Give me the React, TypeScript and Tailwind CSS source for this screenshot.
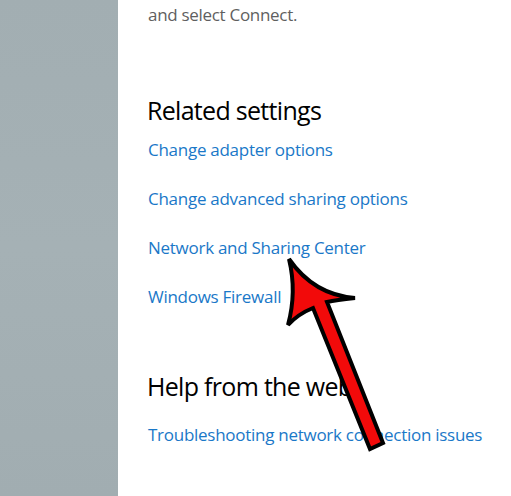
const links = [
  'Change adapter options',
  'Change advanced sharing options',
  'Network and Sharing Center',
  'Windows Firewall',
];

function Arrow() {
  return (
    <svg
      className="absolute left-0 top-0 pointer-events-none"
      width="511"
      height="496"
      viewBox="0 0 511 496"
    >
      <path
        d="M289 259 Q314 295 355 298 Q336 300 327 302 L383 443 L370 449 L313 308 Q298 314 288 325 Q297 292 289 259 Z"
        fill="#f20a0a"
        stroke="#000"
        strokeWidth="4"
        strokeLinejoin="miter"
      />
    </svg>
  );
}

export default function App() {
  return (
    <div
      className="relative flex w-[511px] h-[496px] overflow-hidden bg-white"
      style={{ fontFamily: '"Segoe UI", "Open Sans", "Noto Sans", sans-serif' }}
    >
      <div className="w-[118px] h-full bg-gradient-to-b from-[#a2aeb2] via-[#a5b1b5] to-[#a1adb1]" />

      <div className="flex-1 pl-[30px] flex flex-col">
        <p className="mt-[3px] h-6 leading-6 text-[17px] tracking-[-0.3px] text-[#5f5f5f]">and select Connect.</p>

        <h2 className="mt-[67px] h-8 leading-8 text-[25px] tracking-[-0.7px] text-black -ml-px">Related settings</h2>

        <ul className="mt-3 flex flex-col gap-[25px]">
          {links.map((l) => (
            <li key={l} className="h-6 leading-6 text-[17px] tracking-[-0.27px] text-[#1a78c8]">
              {l}
            </li>
          ))}
        </ul>

        <h2 className="mt-[61px] h-8 leading-8 text-[25px] tracking-[-0.7px] text-black -ml-px">Help from the web</h2>

        <p className="mt-[21px] h-6 leading-6 text-[17px] tracking-[-0.27px] text-[#1a78c8]">
          Troubleshooting network connection issues
        </p>
      </div>

      <Arrow />
    </div>
  );
}
